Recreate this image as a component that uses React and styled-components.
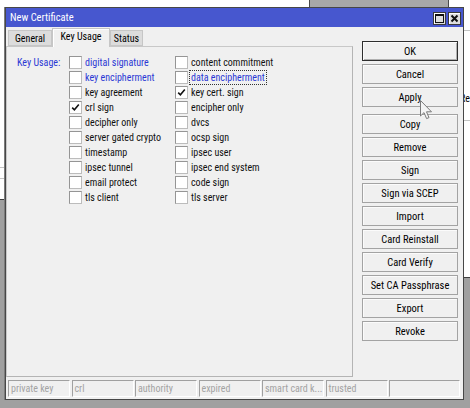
import React from "react";
import styled, { createGlobalStyle } from "styled-components";

const Global = createGlobalStyle`
  html, body { margin: 0; padding: 0; }
  body { width: 470px; height: 408px; overflow: hidden; background: #a0a0a0; }
  * { box-sizing: border-box; }
`;

const FONT = `"Roboto Condensed", "Liberation Sans", Arial, sans-serif`;

const Desktop = styled.div`
  position: relative;
  width: 470px;
  height: 408px;
  background: #a0a0a0;
  overflow: hidden;
  font-family: ${FONT};
  font-size: 10px;
  color: #000;
`;

const BackPane = styled.div`
  position: absolute;
  left: ${(p) => p.$x}px;
  top: 0;
  width: ${(p) => p.$w}px;
  height: ${(p) => p.$h}px;
  background: #fff;
  border-bottom: 1px solid #3e3e3e;
`;

const BackRule = styled.div`
  position: absolute;
  left: 0;
  right: 0;
  top: ${(p) => p.$y}px;
  height: 1px;
  background: #c4c4c4;
`;

const BackBox = styled.div`
  position: absolute;
  left: 9px;
  top: 0;
  width: 140px;
  height: 8px;
  background: #a8a8a8;
  border-left: 1px solid #4a4a4a;
  border-right: 1px solid #4a4a4a;
`;

const BackText = styled.span`
  position: absolute;
  left: 160px;
  top: 93px;
  font-size: 10px;
  line-height: 12px;
`;

const Dialog = styled.div`
  position: absolute;
  left: 5px;
  top: 7px;
  width: 459px;
  height: 393px;
  display: flex;
  flex-direction: column;
  background: #f0f0f0;
  border: 1px solid #474747;
  box-shadow: -1px 0 0 #7c7c7c;
`;

const TitleBar = styled.div`
  height: 19px;
  flex: none;
  display: flex;
  align-items: center;
  justify-content: space-between;
  padding: 0 2px 0 4px;
  background: #4757cf;
  color: #fff;
  font-size: 10.5px;
`;

const Controls = styled.div`
  display: flex;
  gap: 2px;
  margin-top: 1px;
`;

const CtrlButton = styled.span`
  width: 13px;
  height: 13px;
  display: flex;
  align-items: center;
  justify-content: center;
  background: #dedede;
  border: 1px solid #3a3a3a;
  box-shadow: inset 1px 1px 0 #fff;
`;

const Main = styled.div`
  height: 350px;
  flex: none;
  display: flex;
`;

const TabArea = styled.div`
  width: 347px;
  display: flex;
  flex-direction: column;
`;

const TabStrip = styled.div`
  height: 19px;
  flex: none;
  display: flex;
  align-items: flex-end;
  padding-left: 2px;
`;

const Tab = styled.div`
  height: ${(p) => (p.$active ? 19 : 16)}px;
  width: ${(p) => p.$w}px;
  display: flex;
  align-items: center;
  justify-content: center;
  background: ${(p) => (p.$active ? "#f0f0f0" : "#dcdcdc")};
  border: 1px solid #c6c6c6;
  border-bottom: ${(p) => (p.$active ? "none" : "1px solid #c6c6c6")};
  box-shadow: ${(p) => (p.$active ? "inset 1px 1px 0 #fff" : "none")};
  padding-bottom: ${(p) => (p.$active ? 3 : 0)}px;
  position: relative;
  z-index: ${(p) => (p.$active ? 1 : 0)};
  margin-bottom: ${(p) => (p.$active ? -1 : 0)}px;
`;

const Panel = styled.div`
  flex: 1;
  display: flex;
  align-items: flex-start;
  padding: 8px 0 0 10px;
  border: 1px solid #c8c8c8;
  border-right-color: #b4b4b4;
  border-bottom-color: #b4b4b4;
  background: #f0f0f0;
`;

const FieldLabel = styled.div`
  width: 52px;
  height: 15px;
  line-height: 15px;
  color: #2b38d4;
  flex: none;
`;

const Column = styled.div`
  width: ${(p) => p.$w}px;
  display: flex;
  flex-direction: column;
  flex: none;
`;

const Item = styled.div`
  height: 15px;
  display: flex;
  align-items: center;
  gap: 2px;
  white-space: nowrap;
`;

const Box = styled.span`
  width: 13px;
  height: 13px;
  flex: none;
  display: flex;
  align-items: center;
  justify-content: center;
  background: #fff;
  border: 1px solid #959595;
  border-right-color: #bcbcbc;
  border-bottom-color: #bcbcbc;
`;

const ItemText = styled.span`
  line-height: 13px;
  padding: 0 1px;
  color: ${(p) => (p.$blue ? "#2b38d4" : "#111")};
  outline: ${(p) => (p.$focus ? "1px dotted #333" : "none")};
  outline-offset: 0;
`;

const ButtonCol = styled.div`
  width: 96px;
  margin-left: 9px;
  padding-top: 14px;
  display: flex;
  flex-direction: column;
  gap: 3px;
`;

const Button = styled.div`
  height: 20px;
  display: flex;
  align-items: center;
  justify-content: center;
  background: #f0f0f0;
  border: 1px solid ${(p) => (p.$default ? "#2e2e2e" : "#a3a3a3")};
  box-shadow: inset 1px 1px 0 #fbfbfb${(p) => (p.$default ? ", inset -1px -1px 0 #b0b0b0" : "")};
  font-size: 10.5px;
  margin-top: ${(p) => (p.$gapTop ? 4 : 0)}px;
  white-space: nowrap;
`;

const StatusBar = styled.div`
  margin-top: 3px;
  height: 17px;
  flex: none;
  display: grid;
  grid-template-columns: repeat(6, 62px) 1fr;
  column-gap: 1.5px;
  padding: 0 3px 0 2px;
`;

const StatusCell = styled.div`
  height: 17px;
  display: flex;
  align-items: center;
  padding-left: 2px;
  color: #a3a3a3;
  border: 1px solid #fff;
  border-top-color: #a0a0a0;
  border-left-color: #a0a0a0;
  white-space: nowrap;
  overflow: hidden;
`;

const Cursor = styled.svg`
  position: absolute;
  left: 420px;
  top: 100px;
`;

const col1 = [
  { t: "digital signature", blue: true },
  { t: "key encipherment", blue: true },
  { t: "key agreement" },
  { t: "crl sign", checked: true },
  { t: "decipher only" },
  { t: "server gated crypto" },
  { t: "timestamp" },
  { t: "ipsec tunnel" },
  { t: "email protect" },
  { t: "tls client" },
];

const col2 = [
  { t: "content commitment" },
  { t: "data encipherment", blue: true, focus: true },
  { t: "key cert. sign", checked: true },
  { t: "encipher only" },
  { t: "dvcs" },
  { t: "ocsp sign" },
  { t: "ipsec user" },
  { t: "ipsec end system" },
  { t: "code sign" },
  { t: "tls server" },
];

const buttons = [
  { t: "OK", def: true },
  { t: "Cancel" },
  { t: "Apply" },
  { t: "Copy", gap: true },
  { t: "Remove" },
  { t: "Sign" },
  { t: "Sign via SCEP" },
  { t: "Import" },
  { t: "Card Reinstall" },
  { t: "Card Verify" },
  { t: "Set CA Passphrase" },
  { t: "Export" },
  { t: "Revoke" },
];

const status = ["private key", "crl", "authority", "expired", "smart card k...", "trusted", ""];

function Check({ item }) {
  return (
    <Item>
      <Box>
        {item.checked && (
          <svg width="9" height="9" viewBox="0 0 9 9">
            <path d="M1.2 4.6 L3.4 6.8 L7.8 1.6" fill="none" stroke="#111" strokeWidth="1.6" />
          </svg>
        )}
      </Box>
      <ItemText $blue={item.blue} $focus={item.focus}>{item.t}</ItemText>
    </Item>
  );
}

export default function App() {
  return (
    <>
      <Global />
      <Desktop>
        <BackPane $x={0} $w={300} $h={200}>
          <BackRule $y={167} />
          <BackRule $y={178} />
        </BackPane>
        <BackPane $x={300} $w={170} $h={278}>
          <BackBox />
          <BackRule $y={30} />
          <BackRule $y={120} />
          <BackText>Re</BackText>
        </BackPane>

        <Dialog>
          <TitleBar>
            <span>New Certificate</span>
            <Controls>
              <CtrlButton>
                <svg width="9" height="9" viewBox="0 0 9 9">
                  <rect x="0.5" y="0.5" width="8" height="8" fill="none" stroke="#111" />
                  <rect x="0.5" y="0.5" width="8" height="1.5" fill="#111" />
                </svg>
              </CtrlButton>
              <CtrlButton>
                <svg width="9" height="9" viewBox="0 0 9 9">
                  <path d="M1.5 1.5 L7.5 7.5 M7.5 1.5 L1.5 7.5" stroke="#111" strokeWidth="2" />
                </svg>
              </CtrlButton>
            </Controls>
          </TitleBar>

          <Main>
            <TabArea>
              <TabStrip>
                <Tab $w={44}>General</Tab>
                <Tab $w={58} $active>Key Usage</Tab>
                <Tab $w={33}>Status</Tab>
              </TabStrip>
              <Panel>
                <FieldLabel>Key Usage:</FieldLabel>
                <Column $w={106}>
                  {col1.map((it) => (
                    <Check key={it.t} item={it} />
                  ))}
                </Column>
                <Column $w={140}>
                  {col2.map((it) => (
                    <Check key={it.t} item={it} />
                  ))}
                </Column>
              </Panel>
            </TabArea>
            <ButtonCol>
              {buttons.map((b) => (
                <Button key={b.t} $default={b.def} $gapTop={b.gap}>
                  {b.t}
                </Button>
              ))}
            </ButtonCol>
          </Main>

          <StatusBar>
            {status.map((s, i) => (
              <StatusCell key={i}>{s}</StatusCell>
            ))}
          </StatusBar>
        </Dialog>

        <Cursor width="13" height="20" viewBox="0 0 13 20">
          <path
            d="M0.5 0.5 L0.5 16 L4 12.6 L6.6 18.6 L9 17.6 L6.5 11.8 L11.5 11.8 Z"
            fill="#f4f4f4"
            stroke="#7a7a7a"
            strokeWidth="1"
          />
        </Cursor>
      </Desktop>
    </>
  );
}
